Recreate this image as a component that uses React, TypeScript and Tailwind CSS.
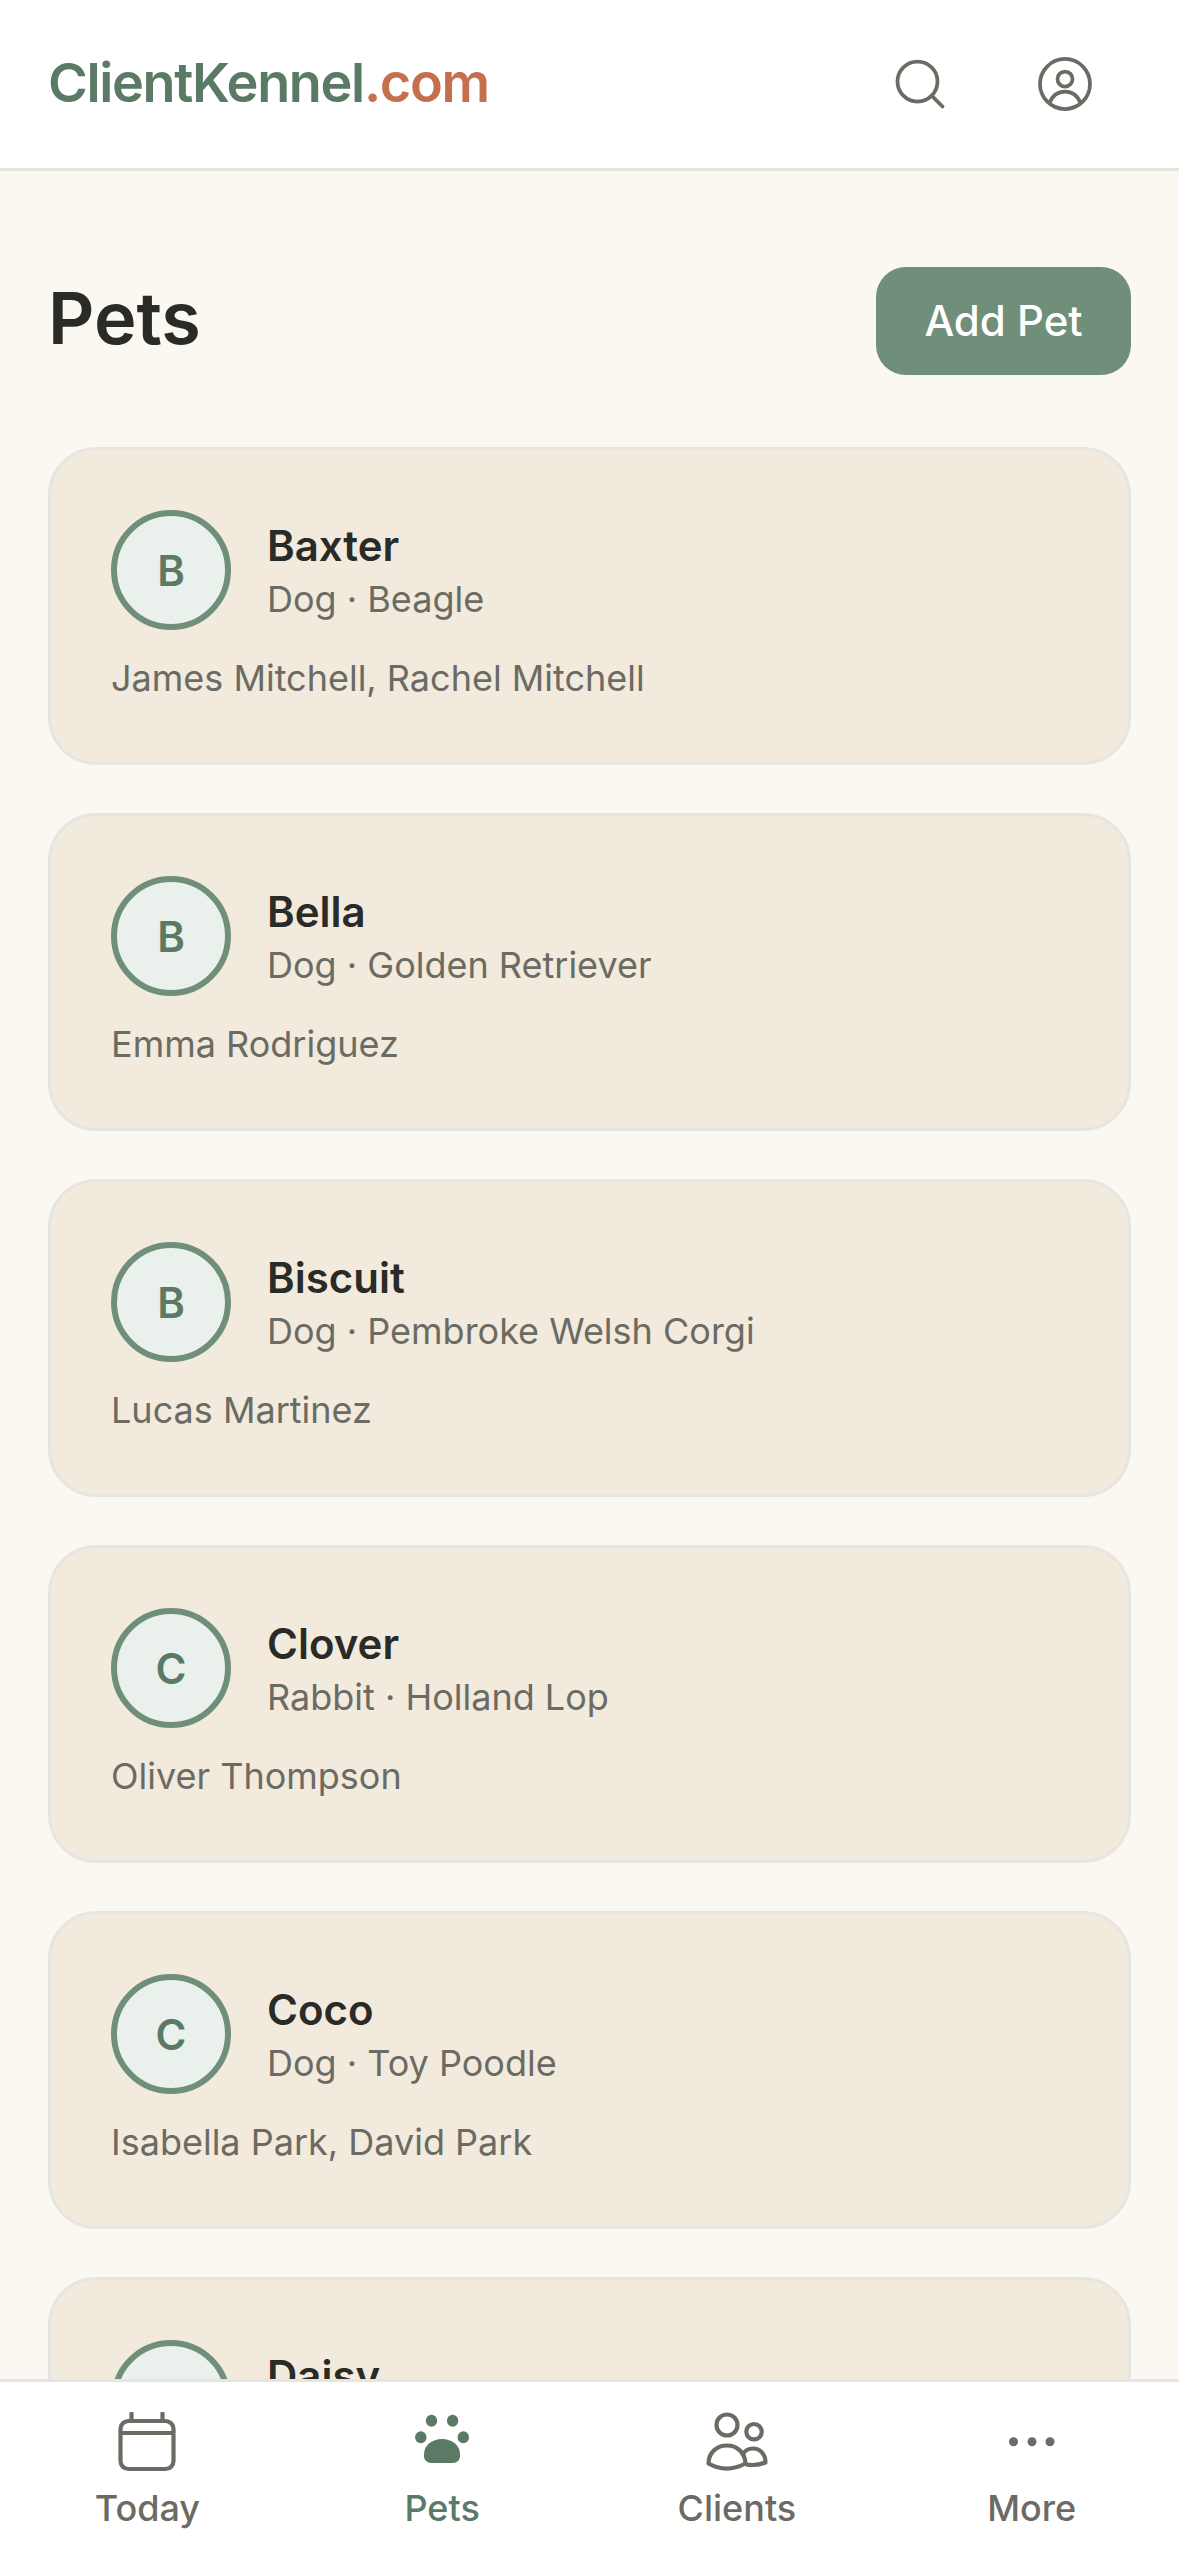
import React from 'react'
import { Search } from 'lucide-react'

type Pet = {
  name: string
  breed?: string
  owners?: string
}

const pets: Pet[] = [
  { name: 'Baxter', breed: 'Dog · Beagle', owners: 'James Mitchell, Rachel Mitchell' },
  { name: 'Bella', breed: 'Dog · Golden Retriever', owners: 'Emma Rodriguez' },
  { name: 'Biscuit', breed: 'Dog · Pembroke Welsh Corgi', owners: 'Lucas Martinez' },
  { name: 'Clover', breed: 'Rabbit · Holland Lop', owners: 'Oliver Thompson' },
  { name: 'Coco', breed: 'Dog · Toy Poodle', owners: 'Isabella Park, David Park' },
  // only the top of this card shows above the nav
  { name: 'Daisy' },
]

function UserIcon() {
  return (
    <svg viewBox="0 0 24 24" className="w-[60px] h-[60px]" fill="none" stroke="currentColor" strokeWidth="1.5">
      <circle cx="12" cy="12" r="10" />
      <circle cx="12" cy="10" r="3" />
      <path d="M5.800 19.500C7 16.600 9.400 15 12 15s5 1.600 6.200 4.500" />
    </svg>
  )
}

function CalendarIcon() {
  return (
    <svg viewBox="0 0 60 60" className="w-[60px] h-[60px]" fill="none" stroke="currentColor" strokeWidth="4.200">
      <rect x="3.500" y="9" width="53" height="48" rx="8" />
      <path d="M3.500 21h53" />
      <path d="M14.500 1.500v7M45.500 1.500v7" strokeLinecap="round" />
    </svg>
  )
}

function PawIcon() {
  return (
    <svg viewBox="0 0 60 60" className="w-[60px] h-[60px]" fill="currentColor">
      <ellipse cx="19.500" cy="8.700" rx="5.700" ry="6" />
      <ellipse cx="40.600" cy="8.700" rx="5.700" ry="6" />
      <ellipse cx="8.800" cy="25.300" rx="5.700" ry="6" />
      <ellipse cx="51.300" cy="25.300" rx="5.700" ry="6" />
      <path d="M12 42C12 33.500 20 27 30 27s18 6.500 18 15v2c0 4-3 7-7 7H19c-4 0-7-3-7-7z" />
    </svg>
  )
}

function ClientsIcon() {
  return (
    <svg viewBox="0 0 60 60" className="w-[60px] h-[60px] overflow-visible" fill="none" stroke="currentColor" strokeWidth="4.200" strokeLinejoin="round">
      <circle cx="20" cy="13" r="10.500" />
      <circle cx="47" cy="19.700" r="7.700" />
      <path d="M1.500 51.500C1.500 40.500 10 33.500 20 33.500s18 7 18.500 18C26 58 13 58 1.500 51.500z" />
      <path d="M36 42c2-3.500 6-5.500 10-5.500 7 0 12.500 5.500 12.500 14-6.500 2.500-13.500 3-19.500 2" />
    </svg>
  )
}

function MoreIcon() {
  return (
    <svg viewBox="0 0 60 60" className="w-[60px] h-[60px]" fill="currentColor">
      <circle cx="11.500" cy="29.700" r="4.500" />
      <circle cx="30" cy="29.700" r="4.500" />
      <circle cx="48" cy="29.700" r="4.500" />
    </svg>
  )
}

function PetCard({ pet }: { pet: Pet }) {
  return (
    <div className="shrink-0 h-[318px] bg-[#f2eadd] border-[3px] border-[#e7e5e2] rounded-[48px] px-[60px] pt-[60px]">
      <div className="flex items-center gap-[36px]">
        <div className="w-[120px] h-[120px] rounded-full border-[6px] border-[#6f8f7a] bg-[#eaf0eb] flex items-center justify-center text-[42px] font-semibold text-[#5a7a65]">
          {pet.name[0]}
        </div>
        <div className={pet.breed ? 'pt-[5px]' : 'self-start pt-[10px]'}>
          <div className="text-[42px] leading-[51px] font-semibold text-[#2a2a26]">{pet.name}</div>
          {pet.breed && <div className="mt-[3px] text-[36px] leading-[51px] text-[#6b6b63]">{pet.breed}</div>}
        </div>
      </div>
      {pet.owners && <div className="mt-[21px] text-[36px] leading-[54px] text-[#6b6b63]">{pet.owners}</div>}
    </div>
  )
}

export default function App() {
  const tabs = [
    { label: 'Today', icon: <CalendarIcon />, active: false },
    { label: 'Pets', icon: <PawIcon />, active: true },
    { label: 'Clients', icon: <ClientsIcon />, active: false },
    { label: 'More', icon: <MoreIcon />, active: false },
  ]

  return (
    <div className="flex flex-col h-screen bg-[#fbf8f2] font-['Inter',sans-serif] overflow-hidden">
      {/* header */}
      <header className="shrink-0 h-[171px] bg-white border-b-[3px] border-[#e7e5e2] flex items-center justify-between pl-[48px] pr-[84px]">
        <div className="pb-[3px] text-[54px] font-semibold tracking-tight text-[#5a7a65]">
          ClientKennel<span className="text-[#c4704f]">.com</span>
        </div>
        <div className="flex items-center gap-[85px] text-[#6b6b63]">
          <Search size={60} strokeWidth={1.5} />
          <UserIcon />
        </div>
      </header>

      {/* list */}
      <main className="flex-1 min-h-0 overflow-hidden px-[48px] pt-[96px]">
        <div className="flex items-center justify-between mb-[72px]">
          <h1 className="mb-[6px] text-[72px] leading-[102px] font-semibold text-[#2a2a26]">Pets</h1>
          <button className="w-[255px] h-[108px] pb-[2px] rounded-[30px] bg-[#6f8f7a] text-white text-[42px] font-medium">
            Add Pet
          </button>
        </div>
        <div className="flex flex-col gap-[48px]">
          {pets.map((pet) => (
            <PetCard key={pet.name} pet={pet} />
          ))}
        </div>
      </main>

      {/* bottom nav */}
      <nav className="shrink-0 h-[177px] bg-white border-t-[3px] border-[#e7e5e2] grid grid-cols-4 pt-[30px]">
        {tabs.map((tab) => (
          <div
            key={tab.label}
            className={tab.active ? 'flex flex-col items-center text-[#5a7a65]' : 'flex flex-col items-center text-[#6b6b63]'}
          >
            {tab.icon}
            <span className="mt-[9px] text-[36px] leading-[54px] font-medium">{tab.label}</span>
          </div>
        ))}
      </nav>
    </div>
  )
}
